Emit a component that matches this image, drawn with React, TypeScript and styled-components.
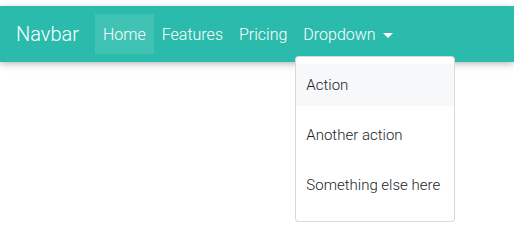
import styled, { createGlobalStyle } from 'styled-components'

const Global = createGlobalStyle`
	body {
		margin: 0;
		font-family: Roboto, "Liberation Sans", sans-serif;
		background: #fff;
	}
`

const Page = styled.div`
	padding-top: 6px;
	min-height: 242px;
`

const Navbar = styled.nav`
	display: flex;
	align-items: center;
	height: 56px;
	padding: 0 16px;
	box-sizing: border-box;
	background-color: #2bbbad;
	box-shadow: 0 2px 5px 0 rgba(0, 0, 0, 0.16), 0 2px 10px 0 rgba(0, 0, 0, 0.12);
`

const Brand = styled.a`
	color: #fff;
	font-size: 20px;
	font-weight: 300;
	line-height: 30px;
	margin-right: 16px;
	text-decoration: none;
`

const NavList = styled.ul`
	display: flex;
	list-style: none;
	margin: 0;
	padding: 0;
`

const NavItem = styled.li`
	position: relative;
`

const NavLink = styled.a<{ $active?: boolean }>`
	display: flex;
	align-items: center;
	height: 40px;
	padding: 0 8px;
	color: #fff;
	font-size: 16px;
	font-weight: 300;
	text-decoration: none;
	background-color: ${(p) => (p.$active ? 'rgba(255, 255, 255, 0.1)' : 'transparent')};
`

const Caret = styled.span`
	display: inline-block;
	margin-left: 7px;
	margin-top: 2px;
	border-top: 5px solid #fff;
	border-left: 5px solid transparent;
	border-right: 5px solid transparent;
`

const Menu = styled.div`
	position: absolute;
	top: 100%;
	left: 0;
	margin-top: 2px;
	width: 160px;
	box-sizing: border-box;
	padding: 7px 0 7px;
	background: #fff;
	border: 1px solid rgba(0, 0, 0, 0.15);
	border-radius: 4px;
	z-index: 10;
`

const MenuItem = styled.a<{ $hover?: boolean }>`
	display: flex;
	align-items: center;
	height: 42px;
	margin-bottom: 8px;
	padding: 0 10px;
	font-size: 15px;
	font-weight: 300;
	color: #212529;
	white-space: nowrap;
	text-decoration: none;
	background-color: ${(p) => (p.$hover ? '#f7f8fa' : 'transparent')};
`

export default function App() {
	return (
		<Page>
			<Global />
			<Navbar>
				<Brand>Navbar</Brand>
				<NavList>
					<NavItem>
						<NavLink $active>Home</NavLink>
					</NavItem>
					<NavItem>
						<NavLink>Features</NavLink>
					</NavItem>
					<NavItem>
						<NavLink>Pricing</NavLink>
					</NavItem>
					<NavItem>
						<NavLink>
							Dropdown
							<Caret />
						</NavLink>
						<Menu>
							<MenuItem $hover>Action</MenuItem>
							<MenuItem>Another action</MenuItem>
							<MenuItem>Something else here</MenuItem>
						</Menu>
					</NavItem>
				</NavList>
			</Navbar>
		</Page>
	)
}
